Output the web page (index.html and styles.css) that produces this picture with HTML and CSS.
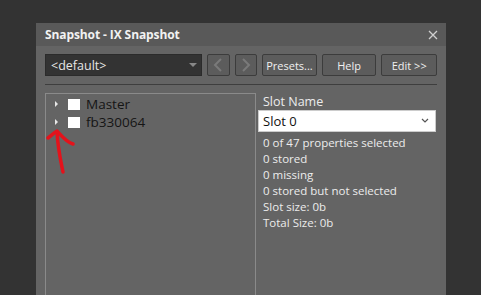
FILE: index.html
```html
<!DOCTYPE html>
<html lang="en">
<head>
  <meta charset="UTF-8">
  <title>Snapshot - IX Snapshot</title>
  <link rel="stylesheet" href="styles.css">
</head>
<body>
  <div class="dialog">
    <div class="titlebar">
      <span class="title">Snapshot - IX Snapshot</span>
      <svg class="close" width="10" height="10" viewBox="0 0 10 10"><path d="M1 1 L9 9 M9 1 L1 9" stroke="#d0d0d0" stroke-width="1.3"/></svg>
    </div>
    <div class="content">
      <!-- Preset toolbar -->
      <div class="toolbar">
        <div class="preset-select">
          <span>&lt;default&gt;</span>
          <span class="caret"></span>
        </div>
        <button class="nav" disabled>
          <svg width="10" height="14" viewBox="0 0 10 14"><path d="M8 1 L2 7 L8 13" fill="none" stroke="#7a7a7a" stroke-width="2"/></svg>
        </button>
        <button class="nav" disabled>
          <svg width="10" height="14" viewBox="0 0 10 14"><path d="M2 1 L8 7 L2 13" fill="none" stroke="#7a7a7a" stroke-width="2"/></svg>
        </button>
        <button class="btn">Presets...</button>
        <button class="btn">Help</button>
        <button class="btn">Edit &gt;&gt;</button>
      </div>
      <hr>

      <div class="main">
        <!-- Object tree -->
        <div class="tree">
          <div class="tree-row">
            <span class="expander"></span>
            <span class="check"></span>
            <span class="label">Master</span>
          </div>
          <div class="tree-row">
            <span class="expander"></span>
            <span class="check"></span>
            <span class="label">fb330064</span>
          </div>
          <svg class="annotation" width="40" height="50" viewBox="0 0 40 50">
            <path d="M17 46 C15 36 12 24 11 6" fill="none" stroke="#e4121b" stroke-width="3.5" stroke-linecap="round"/>
            <path d="M2 12 C6 9 9 6 11 5 C15 9 20 16 27 18" fill="none" stroke="#e4121b" stroke-width="3.5" stroke-linecap="round" stroke-linejoin="round"/>
          </svg>
        </div>

        <!-- Slot info -->
        <div class="slot">
          <div class="slot-title">Slot Name</div>
          <div class="slot-select">
            <span>Slot 0</span>
            <svg width="8" height="6" viewBox="0 0 8 6"><path d="M1 1 L4 4 L7 1" fill="none" stroke="#555" stroke-width="1.2"/></svg>
          </div>
          <div class="stats">
            <div>0 of 47 properties selected</div>
            <div>0 stored</div>
            <div>0 missing</div>
            <div>0 stored but not selected</div>
            <div>Slot size: 0b</div>
            <div>Total Size: 0b</div>
          </div>
        </div>
      </div>
    </div>
  </div>
</body>
</html>
```

FILE: styles.css
```css
body {margin:0; padding:0; background:#333; font-family:"Open Sans","Noto Sans",sans-serif; height:295px; overflow:hidden;}
.dialog {margin:23px 0 0 36px; width:410px; height:272px; background:#646464; display:flex; flex-direction:column;}
.titlebar {height:23px; background:#595959; display:flex; align-items:center; justify-content:space-between; padding:0 9px;}
.title {color:#f2f2f2; font-weight:700; font-size:12px; letter-spacing:-0.1px;}
.close {margin-right:-1px; margin-top:1px;}
.content {padding:8px 9px 0; flex:1; display:flex; flex-direction:column;}
/* Toolbar */
.toolbar {display:flex; align-items:stretch; height:22px;}
.preset-select {width:150px; background:#333; border:1px solid #2b2b2b; display:flex; align-items:center; justify-content:space-between; padding:0 4px 0 5px; color:#e6e6e6; font-size:12.5px;}
.caret {width:0; height:0; border-left:4px solid transparent; border-right:4px solid transparent; border-top:4px solid #888;}
button {font-family:inherit; margin:0 0 0 5px; padding:0; background:#5c5c5c; border:1px solid #3c3c3c; border-radius:2px; color:#f0f0f0; font-size:11px; cursor:pointer;}
.nav {width:23px; display:flex; align-items:center; justify-content:center;}
.btn {width:56px;}
.btn:last-child {width:57px;}
hr {border:0; height:1px; background:#3e3e3e; margin:8px 0 8px;}
/* Main split */
.main {flex:1; display:flex;}
.tree {width:209px; border:1px solid #8a8a8a; border-bottom:0; position:relative; padding-top:1px;}
.tree-row {display:flex; align-items:center; height:18px; padding-left:9px;}
.expander {width:0; height:0; border-top:3px solid transparent; border-bottom:3px solid transparent; border-left:3px solid #e8e8e8; margin-right:10px;}
.check {width:12px; height:11px; background:#fff; margin-right:6px;}
.label {font-size:13.5px; color:#151515;}
.annotation {position:absolute; left:0; top:32px;}
.slot {flex:1; padding-left:2px;}
.slot-title {color:#ececec; font-size:12.5px; padding-left:5px; height:16px; line-height:16px; margin-top:1px;}
.slot-select {height:20px; background:#fff; border:1px solid #ccc; display:flex; align-items:center; justify-content:space-between; padding:0 6px 0 4px; font-size:13px; color:#111; width:166px;}
.stats {padding-left:5px; margin-top:3px; color:#ececec; font-size:11.5px; line-height:16px;}
```
